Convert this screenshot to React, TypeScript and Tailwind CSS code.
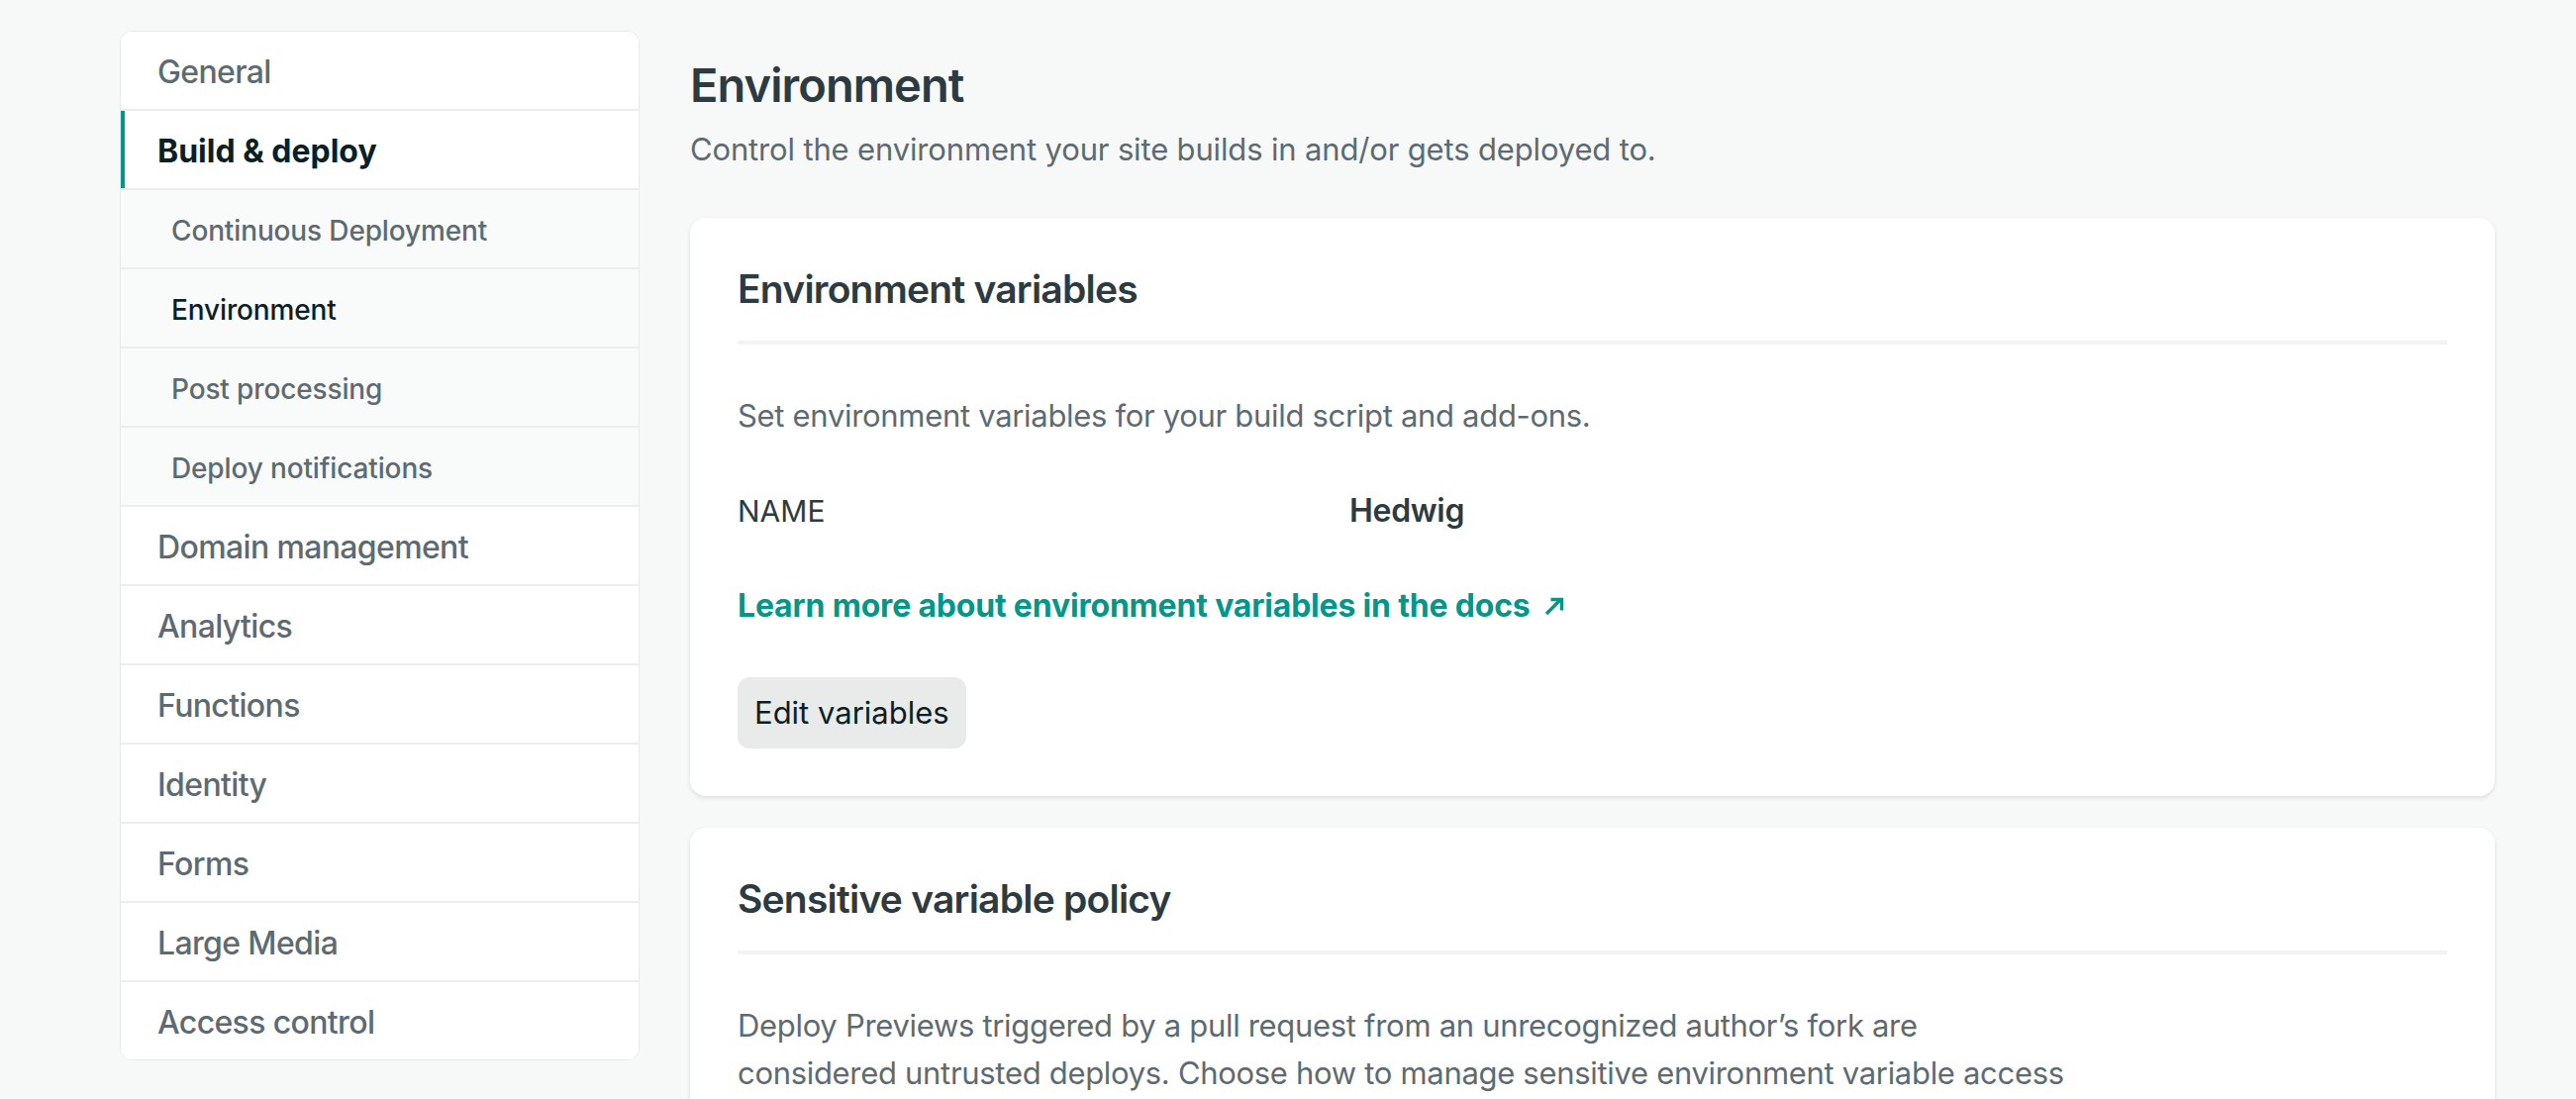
import React from "react";

type Item = { label: string; sub?: boolean; active?: boolean; current?: boolean };

const items: Item[] = [
  { label: "General" },
  { label: "Build & deploy", active: true },
  { label: "Continuous Deployment", sub: true },
  { label: "Environment", sub: true, current: true },
  { label: "Post processing", sub: true },
  { label: "Deploy notifications", sub: true },
  { label: "Domain management" },
  { label: "Analytics" },
  { label: "Functions" },
  { label: "Identity" },
  { label: "Forms" },
  { label: "Large Media" },
  { label: "Access control" },
];

function SideRow({ item, last }: { item: Item; last: boolean }) {
  const base =
    "relative flex items-center pt-[4px] " + (last ? "h-[78px] " : "h-[80px] border-b-2 border-[#eceeee] ");
  if (item.sub) {
    return (
      <div className={base + "bg-[#f9fafa] pl-[51px]"}>
        <span
          className={
            "text-[28px] font-medium tracking-[-0.005em] " +
            (item.current ? "text-[#0e1e25]" : "text-[#5e6a71]")
          }
        >
          {item.label}
        </span>
      </div>
    );
  }
  return (
    <div className={base + "bg-white pl-[37px]"}>
      {item.active && <span className="absolute -left-px top-0 bottom-0 w-[5px] bg-[#05968a]" />}
      <span
        className={
          "text-[32px] " +
          (item.active ? "font-bold text-[#0e1e25]" : "font-medium tracking-[-0.02em] text-[#5e6a71]")
        }
      >
        {item.label}
      </span>
    </div>
  );
}

function ArrowIcon() {
  return (
    <svg width="22" height="20" viewBox="0 0 22 20" className="ml-[13px] shrink-0" fill="none">
      <path d="M3 18 L17 4" stroke="#05968a" strokeWidth="3.4" />
      <path d="M7.5 3.5 H18.5 V14.5" stroke="#05968a" strokeWidth="3.4" fill="none" />
    </svg>
  );
}

export default function App() {
  return (
    <div className="min-h-screen bg-[#f7f9f9] font-['Inter',sans-serif]">
      <div className="flex items-start gap-[51px] pl-[121px] pr-[82px] pt-[31px]">
        <nav className="w-[525px] shrink-0 overflow-hidden rounded-[12px] border border-[#e7eaea] bg-white">
          {items.map((it, i) => (
            <SideRow key={it.label + i} item={it} last={i === items.length - 1} />
          ))}
        </nav>

        <main className="min-w-0 flex-1 pt-[25px]">
          <h1 className="text-[47px] font-semibold leading-[60px] tracking-[-0.02em] text-[#2d3b41]">
            Environment
          </h1>
          <p className="mt-[11px] text-[31px] leading-[48px] tracking-[-0.005em] text-[#5e6a71]">
            Control the environment your site builds in and/or gets deployed to.
          </p>

          <section className="mt-[45px] rounded-[16px] bg-white p-[48px] shadow-[0_2px_4px_0_rgba(14,30,37,0.12)]">
            <h2 className="text-[39px] font-semibold leading-[48px] tracking-[-0.02em] text-[#2d3b41]">
              Environment variables
            </h2>
            <div className="mt-[28px] h-[4px] bg-[#f2f4f4]" />
            <p className="mt-[48px] text-[31px] leading-[48px] tracking-[-0.01em] text-[#5e6a71]">
              Set environment variables for your build script and add-ons.
            </p>
            <dl className="mt-[48px] flex h-[48px] items-center text-[#2d3b41]">
              <dt className="w-[618px] shrink-0 text-[30px]">NAME</dt>
              <dd className="text-[32px] font-semibold tracking-[-0.01em]">Hedwig</dd>
            </dl>
            <a className="mt-[48px] flex h-[48px] items-center text-[#05968a]" href="#">
              <span className="text-[32px] font-bold tracking-[-0.006em]">
                Learn more about environment variables in the docs
              </span>
              <ArrowIcon />
            </a>
            <div className="mt-[48px]">
              <button className="h-[72px] rounded-[12px] bg-[#e9ebeb] px-[17px] text-[31px] leading-[48px] text-[#0e1e25]">
                Edit variables
              </button>
            </div>
          </section>

          <section className="mt-[32px] rounded-[16px] bg-white p-[48px] shadow-[0_2px_4px_0_rgba(14,30,37,0.12)]">
            <h2 className="text-[39px] font-semibold leading-[48px] tracking-[-0.02em] text-[#2d3b41]">
              Sensitive variable policy
            </h2>
            <div className="mt-[28px] h-[4px] bg-[#f2f4f4]" />
            <p className="mt-[48px] text-[31px] leading-[48px] tracking-[-0.01em] text-[#5e6a71]">
              Deploy Previews triggered by a pull request from an unrecognized author’s fork are
              <br />
              considered untrusted deploys. Choose how to manage sensitive environment variable access
            </p>
          </section>
        </main>
      </div>
    </div>
  );
}
